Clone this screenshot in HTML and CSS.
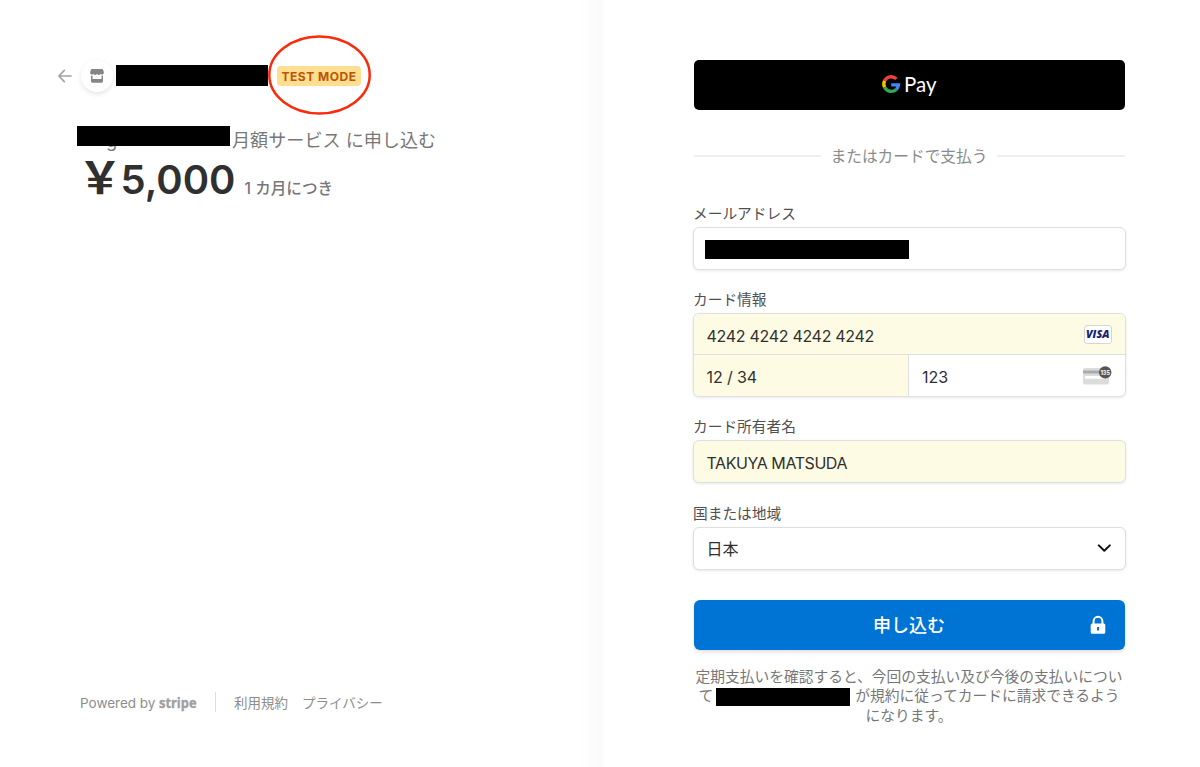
FILE: index.html
```html
<!DOCTYPE html>
<html lang="ja">
<head>
<meta charset="utf-8">
<title>Checkout</title>
<link rel="stylesheet" href="styles.css">
</head>
<body>
<div class="page">
  <section class="overview">
    <header class="merchant">
      <svg class="back" width="14" height="14" viewBox="0 0 14 14"><path d="M13 7H1M6.300 1.400L.9 7l5.400 5.600" fill="none" stroke="#a3a3a3" stroke-width="1.700" stroke-linecap="round" stroke-linejoin="round"/></svg>
      <span class="shop">
        <svg width="16" height="16" viewBox="0 0 16 16" fill="#858585"><path d="M3 1h10q.9 0 1.200.9L14.900 4.500A2 2 0 0 1 11.500 6 2.300 2.300 0 0 1 8 6 2.300 2.300 0 0 1 4.500 6 2 2 0 0 1 1.100 4.500L1.800 1.900Q2.100 1 3 1z"/><path d="M2 7.500q.8.300 1.500 0V11h9V7.500q.7.300 1.500 0V13.300q0 1.400-1.400 1.400H3.400Q2 14.700 2 13.300z"/></svg>
      </span>
      <span class="mask mask-name"></span>
      <span class="badge">TEST MODE<svg class="ring" width="104" height="81" viewBox="0 0 104 81"><ellipse cx="52.500" cy="40" rx="50.200" ry="38.400" fill="none" stroke="#fb2a0a" stroke-width="2.500"/></svg></span>
    </header>
    <div class="product"><span class="mask mask-product"><span class="under">g</span></span><span class="name">月額サービス に申し込む</span></div>
    <div class="price"><span class="yen">￥</span><span class="amount">5,000</span><span class="interval">1 カ月につき</span></div>
    <footer class="footer">
      <span class="powered">Powered by</span>
      <svg class="stripe" width="38" height="24" viewBox="0 0 38 24"><text x="0" y="17" textLength="37.500" lengthAdjust="spacingAndGlyphs">stripe</text></svg>
      <span class="rule"></span>
      <span class="terms">利用規約</span><span class="terms">プライバシー</span>
    </footer>
  </section>

  <main class="payment">
    <form class="form">
      <div class="gpay">
        <svg width="56" height="26" viewBox="0 0 56 26"><g fill="none" stroke-width="3.400"><path d="M15.400 6.900A7.400 7.400 0 0 0 3.600 8.700" stroke="#ea4335"/><path d="M3.600 8.700a7.400 7.400 0 0 0 0 6.600" stroke="#fbbc04"/><path d="M3.600 15.300a7.400 7.400 0 0 0 11.600 2.100" stroke="#34a853"/><path d="M15.200 17.400a7.100 7.100 0 0 0 2.300-4.500H10.200" stroke="#4285f4"/></g><text x="23" y="20" textLength="32.500" lengthAdjust="spacingAndGlyphs">Pay</text></svg>
      </div>
      <div class="divider"><span>またはカードで支払う</span></div>

      <div class="label">メールアドレス</div>
      <div class="field email"><span class="mask mask-email"></span></div>

      <div class="label">カード情報</div>
      <div class="card">
        <div class="cell number filled"><span>4242 4242 4242 4242</span>
          <svg width="28" height="19" viewBox="0 0 28 19"><rect x=".5" y=".5" width="27" height="18" rx="2.500" fill="#fff" stroke="#d5d5d5"/><text class="visa" x="2" y="13.300" textLength="23.500" lengthAdjust="spacingAndGlyphs">VISA</text></svg>
        </div>
        <div class="cell expiry filled"><span>12 / 34</span></div>
        <div class="cell cvc"><span>123</span>
          <svg width="30" height="20" viewBox="0 0 30 20"><rect x="1" y="2" width="26" height="16.500" rx="2" fill="#dcdcdc"/><path d="M1 4.500h26v3H1z" fill="#a9a9a9"/><path d="M3 10h20v2.700H3z" fill="#fff"/><circle cx="23.200" cy="6.400" r="6.200" fill="#555"/><text class="code" x="18.400" y="8.900" textLength="9.600" lengthAdjust="spacingAndGlyphs">135</text></svg>
        </div>
      </div>

      <div class="label">カード所有者名</div>
      <div class="field filled holder">TAKUYA MATSUDA</div>

      <div class="label region">国または地域</div>
      <div class="field country"><span>日本</span>
        <svg width="14" height="10" viewBox="0 0 14 10"><path d="M1.800 2.400L7.300 7.700l5.500-5.300" fill="none" stroke="#111" stroke-width="2" stroke-linecap="round" stroke-linejoin="round"/></svg>
      </div>

      <div class="submit"><span>申し込む</span>
        <svg class="lock" width="16" height="20" viewBox="0 0 16 20"><path d="M3.600 9V6.200a4.400 4.400 0 0 1 8.800 0V9" fill="none" stroke="#fff" stroke-width="2"/><path fill-rule="evenodd" d="M2.300 8.500h11.400q1.600 0 1.600 1.600v7.100q0 1.600-1.600 1.600H2.300Q.7 18.800.7 17.200v-7.100Q.7 8.500 2.300 8.500zM7 12v3.600h2V12z" fill="#fff"/></svg>
      </div>
      <div class="legal">
        <div>定期支払いを確認すると、今回の支払い及び今後の支払いについ</div>
        <div>て<span class="mask mask-legal"></span>が規約に従ってカードに請求できるよう</div>
        <div>になります。</div>
      </div>
    </form>
  </main>
</div>
</body>
</html>
```
FILE: styles.css
```css
* { box-sizing: border-box; }

body {
  margin: 0;
  background: #fff;
  color: #303030;
  font-family: Inter, "Noto Sans CJK JP", sans-serif;
}

svg { display: block; flex: none; }

.page {
  display: grid;
  grid-template-columns: 603px 597px;
  height: 767px;
  overflow: hidden;
}

.mask { display: inline-block; flex: none; background: #000; }

/* Order overview */
.overview {
  display: flex;
  flex-direction: column;
  isolation: isolate;
  padding: 60px 0 53px 58px;
  background: linear-gradient(to right, #fff 580px, #fafafa 603px);
}

.merchant { display: flex; align-items: center; height: 32px; }
.shop {
  display: flex;
  align-items: center;
  justify-content: center;
  width: 32px;
  height: 32px;
  margin-left: 9px;
  border-radius: 50%;
  background: #fff;
  box-shadow: 0 2px 5px rgba(0, 0, 0, .11);
}
.shop svg { margin-right: 1px; }
.mask-name { width: 152px; height: 21px; margin: -2px 0 0 3px; }
.badge {
  position: relative;
  width: 84px;
  height: 20px;
  margin-left: 9px;
  border-radius: 4px;
  background: #ffde92;
  color: #bb5504;
  font-size: 12px;
  font-weight: 700;
  line-height: 21px;
  letter-spacing: .5px;
  text-align: center;
  white-space: nowrap;
}
.ring { position: absolute; left: -10px; top: -31px; }

.product {
  display: flex;
  align-items: center;
  height: 28px;
  margin: 32px 0 0 19px;
  color: #777;
  font-size: 18.100px;
  white-space: nowrap;
}
.name { margin-top: 2px; }
.mask-product { position: relative; width: 153px; height: 20px; margin: -5px 2px 0 0; }
.under { position: absolute; z-index: -1; left: 29px; top: 3px; line-height: 22px; }

.price { display: flex; align-items: baseline; height: 54px; margin: -4px 0 0 20px; line-height: 54px; white-space: nowrap; }
.yen { width: 42.500px; font-size: 44px; font-family: "Noto Sans CJK JP", sans-serif; font-weight: 700; }
.amount { width: 124px; font-size: 40px; font-weight: 600; }
.interval { color: #777; font-size: 15.600px; font-weight: 500; }

.footer {
  display: flex;
  align-items: center;
  height: 22px;
  margin: auto 0 0 22px;
  color: #8d8d8d;
  font-size: 13.500px;
  white-space: nowrap;
}
.powered { width: 79px; }
.stripe text { fill: #a0a0a0; stroke: #a0a0a0; stroke-width: .4px; font: 700 15px "Open Sans", sans-serif; }
.rule { width: 1px; height: 20px; margin: -2px 18px 0; background: #ddd; }
.terms { margin: -2px 14px 0 0; }

/* Payment form */
.payment { padding: 60px 74px 0 89.500px; background: #fff; }
.form { width: 433px; }

.gpay {
  display: flex;
  align-items: center;
  justify-content: center;
  height: 50px;
  margin: 0 1px;
  border-radius: 5px;
  background: #000;
}
.gpay text { fill: #fff; font: 400 21.500px Lato, sans-serif; }

.divider {
  display: flex;
  align-items: center;
  gap: 10px;
  height: 24px;
  margin: 34px 1px 0;
  color: #8b8b8b;
  font-size: 15.700px;
  white-space: nowrap;
}
.divider span { margin-top: -2px; }
.divider::before, .divider::after { content: ""; flex: 1; height: 2px; background: #efefef; }

.label {
  height: 20px;
  margin: 20px 0 3px .5px;
  color: #505050;
  font-size: 14.700px;
  line-height: 20px;
}
.divider + .label { margin-top: 36px; }
.label.region { margin-top: 20.600px; }

.field, .card {
  border: 1px solid #dfdfdf;
  border-radius: 6px;
  background: #fff;
  box-shadow: 0 1px 3px rgba(0, 0, 0, .09);
}
.field {
  display: flex;
  align-items: center;
  justify-content: space-between;
  height: 43px;
  padding: 0 14px 0 13px;
  font-size: 16px;
}
.field.filled, .cell.filled { background: #fefbe5; }
.email { padding: 2px 0 0 11.500px; }
.mask-email { width: 204px; height: 19px; }
.holder { padding-top: 2px; letter-spacing: -.43px; }

.card {
  display: grid;
  grid-template-columns: 214.500px 1fr;
  grid-template-rows: 40px 42px;
  height: 84px;
  overflow: hidden;
}
.cell {
  display: flex;
  align-items: center;
  justify-content: space-between;
  padding: 2px 13px 0;
  font-size: 16px;
}
.cell svg { margin-top: -1px; }
.number { grid-column: 1 / 3; letter-spacing: -.3px; }
.number span { margin-top: 2px; }
.expiry { letter-spacing: -.1px; }
.expiry, .cvc { border-top: 1px solid #dfdfdf; }
.cvc { border-left: 1px solid #dfdfdf; }
.visa { fill: #1a1f71; font: italic 800 10.500px "Open Sans", sans-serif; letter-spacing: 0; }
.code { fill: #fff; font: 700 6.500px Inter, sans-serif; }

.submit {
  position: relative;
  display: flex;
  align-items: center;
  justify-content: center;
  height: 50px;
  margin: 30.400px 1px 0;
  border-radius: 6px;
  background: #0074d4;
  box-shadow: 0 2px 4px rgba(0, 0, 0, .12);
  color: #fff;
  font-size: 18px;
  font-weight: 500;
}
.submit span { margin-top: -2px; }
.lock { position: absolute; right: 19px; top: 15px; }

.legal {
  margin: 18px 0 0;
  color: #777;
  font-size: 14.750px;
  line-height: 19.500px;
  text-align: center;
  white-space: nowrap;
}
.mask-legal { width: 134px; height: 18px; margin: 0 5px 0 3px; vertical-align: -5px; }
.legal div { height: 19.500px; }
```
